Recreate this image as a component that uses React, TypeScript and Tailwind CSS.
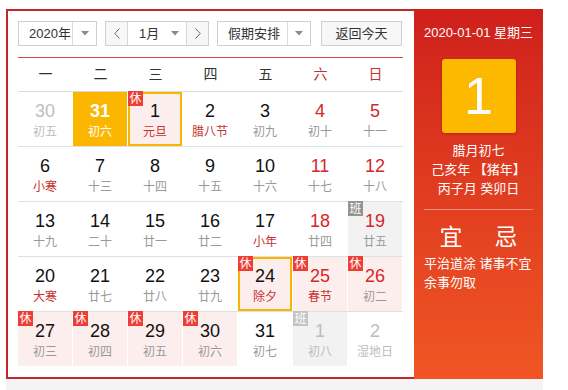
import React from "react";

type Cell = {
  n: string;
  l: string;
  numRed?: boolean;
  lunarRed?: boolean;
  faded?: boolean;
  bg?: "pink" | "gray" | "yellow";
  ring?: boolean;
  badge?: "休" | "班";
  badgeLight?: boolean;
};

const rows: Cell[][] = [
  [
    { n: "30", l: "初五", faded: true },
    { n: "31", l: "初六", bg: "yellow" },
    { n: "1", l: "元旦", lunarRed: true, bg: "pink", ring: true, badge: "休" },
    { n: "2", l: "腊八节", lunarRed: true },
    { n: "3", l: "初九" },
    { n: "4", l: "初十", numRed: true },
    { n: "5", l: "十一", numRed: true },
  ],
  [
    { n: "6", l: "小寒", lunarRed: true },
    { n: "7", l: "十三" },
    { n: "8", l: "十四" },
    { n: "9", l: "十五" },
    { n: "10", l: "十六" },
    { n: "11", l: "十七", numRed: true },
    { n: "12", l: "十八", numRed: true },
  ],
  [
    { n: "13", l: "十九" },
    { n: "14", l: "二十" },
    { n: "15", l: "廿一" },
    { n: "16", l: "廿二" },
    { n: "17", l: "小年", lunarRed: true },
    { n: "18", l: "廿四", numRed: true },
    { n: "19", l: "廿五", numRed: true, bg: "gray", badge: "班" },
  ],
  [
    { n: "20", l: "大寒", lunarRed: true },
    { n: "21", l: "廿七" },
    { n: "22", l: "廿八" },
    { n: "23", l: "廿九" },
    { n: "24", l: "除夕", lunarRed: true, bg: "pink", ring: true, badge: "休" },
    { n: "25", l: "春节", numRed: true, lunarRed: true, bg: "pink", badge: "休" },
    { n: "26", l: "初二", numRed: true, bg: "pink", badge: "休" },
  ],
  [
    { n: "27", l: "初三", bg: "pink", badge: "休" },
    { n: "28", l: "初四", bg: "pink", badge: "休" },
    { n: "29", l: "初五", bg: "pink", badge: "休" },
    { n: "30", l: "初六", bg: "pink", badge: "休" },
    { n: "31", l: "初七" },
    { n: "1", l: "初八", faded: true, bg: "gray", badge: "班", badgeLight: true },
    { n: "2", l: "湿地日", faded: true },
  ],
];

const weekdays = ["一", "二", "三", "四", "五", "六", "日"];

function Caret() {
  return (
    <svg width="8" height="5" viewBox="0 0 8 5">
      <polygon points="0,0 8,0 4,4.5" fill="#8a8a8a" />
    </svg>
  );
}

function Chevron({ dir }: { dir: "l" | "r" }) {
  return (
    <svg width="6" height="11" viewBox="0 0 6 11">
      <polyline
        points={dir === "l" ? "5.5,0.5 0.8,5.5 5.5,10.5" : "0.5,0.5 5.2,5.5 0.5,10.5"}
        fill="none"
        stroke="#666"
        strokeWidth="1"
      />
    </svg>
  );
}

function DayCell({ c }: { c: Cell }) {
  let bg = "bg-white";
  if (c.bg === "pink") bg = "bg-[#fdeeee]";
  if (c.bg === "gray") bg = "bg-[#f2f2f2]";
  if (c.bg === "yellow") bg = "bg-[#fbb700]";

  let numColor = "text-[#111]";
  if (c.numRed) numColor = "text-[#d7262b]";
  if (c.faded) numColor = "text-[#bdbdbd]";
  if (c.bg === "yellow") numColor = "text-white";

  let lunarColor = "text-[#999]";
  if (c.lunarRed) lunarColor = "text-[#c9302c]";
  if (c.faded) lunarColor = "text-[#bdbdbd]";
  if (c.bg === "yellow") lunarColor = "text-white";

  return (
    <div className="w-[55px] pr-px">
      <div
        className={`relative h-[54px] ${bg} flex flex-col items-center pt-[9px] ${
          c.ring ? "shadow-[inset_0_0_0_2px_#f7b500]" : ""
        }`}
      >
        {c.badge && (
          <div
            className={`absolute left-0 top-[-1px] w-[15px] h-[15px] flex items-center justify-center text-[12px] leading-none text-white ${
              c.badge === "休"
                ? "bg-[#ee3d35]"
                : c.badgeLight
                ? "bg-[#c4c4c4]"
                : "bg-[#939393]"
            }`}
          >
            {c.badge}
          </div>
        )}
        <div className={`text-[18px] leading-[20px] ${numColor} ${c.bg === "yellow" ? "font-bold" : ""}`}>{c.n}</div>
        <div className={`mt-[3px] text-[12px] leading-[16px] ${lunarColor}`}>{c.l}</div>
      </div>
    </div>
  );
}

export default function App() {
  return (
    <div
      className="w-[568px] h-[390px] bg-white overflow-hidden"
      style={{ fontFamily: '"Liberation Sans", "Noto Sans CJK SC", sans-serif' }}
    >
      <div className="pl-[6px] pt-[9px]">
        <div className="flex w-[537px] h-[370px]">
          {/* left panel */}
          <div className="w-[408px] h-[370px] border-2 border-r-0 border-[#c1272d] pt-[10px] pl-[10px]">
            {/* toolbar */}
            <div className="flex h-[25px] text-[13px] text-[#333]">
              <div className="flex w-[79px] h-[25px] border border-[#d0d0d0] bg-white">
                <div className="w-[54px] pl-[10px] flex items-center border-r border-[#dcdcdc]">2020年</div>
                <div className="flex-1 flex items-center justify-center">
                  <Caret />
                </div>
              </div>
              <div className="ml-[8px] flex w-[104px] h-[25px] border border-[#d0d0d0]">
                <div className="w-[22px] bg-[#f7f7f7] flex items-center justify-center border-r border-[#d6d6d6]">
                  <Chevron dir="l" />
                </div>
                <div className="w-[59px] bg-white flex items-center pl-[11px] pr-[7px] justify-between border-r border-[#d6d6d6]">
                  <span>1月</span>
                  <Caret />
                </div>
                <div className="flex-1 bg-[#f7f7f7] flex items-center justify-center">
                  <Chevron dir="r" />
                </div>
              </div>
              <div className="ml-[8px] flex w-[94px] h-[25px] border border-[#d0d0d0] bg-white">
                <div className="w-[70px] pl-[10px] flex items-center border-r border-[#dcdcdc]">假期安排</div>
                <div className="flex-1 flex items-center justify-center">
                  <Caret />
                </div>
              </div>
              <div className="ml-[10px] w-[81px] h-[25px] border border-[#d0d0d0] bg-[#f7f7f7] flex items-center justify-center">
                返回今天
              </div>
            </div>

            {/* calendar */}
            <div className="mt-[11px] w-[385px] border-t border-[#d9474b]">
              <div className="grid grid-cols-7 h-[34px] border-b border-[#dcdcdc]">
                {weekdays.map((w, i) => (
                  <div
                    key={w}
                    className={`flex items-center justify-center text-[14px] ${
                      i >= 5 ? "text-[#c5302f]" : "text-[#333]"
                    }`}
                  >
                    {w}
                  </div>
                ))}
              </div>
              {rows.map((r, ri) => (
                <div
                  key={ri}
                  className={`flex ${ri < rows.length - 1 ? "border-b border-[#e0e0e0]" : ""}`}
                >
                  {r.map((c, ci) => (
                    <DayCell key={ci} c={c} />
                  ))}
                </div>
              ))}
            </div>
          </div>

          {/* right panel */}
          <div className="w-[129px] h-[370px] bg-linear-to-b from-[#cf1f1c] to-[#f15524] px-[10px] pt-[16px] flex flex-col items-center text-white">
            <div className="text-[13px] leading-[16px] whitespace-nowrap">2020-01-01 星期三</div>
            <div className="mt-[18px] w-[74px] h-[74px] rounded-[3px] bg-[#fcb900] shadow-[0_1px_3px_rgba(120,0,0,0.35)] flex items-center justify-center text-[52px] leading-none">
              1
            </div>
            <div className="mt-[8px] text-[13px] leading-[19px] text-center">
              <div>腊月初七</div>
              <div>己亥年 【猪年】</div>
              <div>丙子月 癸卯日</div>
            </div>
            <div className="mt-[11px] w-full h-px bg-[#f58a80]" />
            <div className="mt-[13px] flex gap-[32px] text-[23px] leading-[28px]">
              <span>宜</span>
              <span>忌</span>
            </div>
            <div className="mt-[3px] w-full text-[13px] leading-[19px] text-left">
              <div className="whitespace-nowrap">平治道涂 诸事不宜</div>
              <div>余事勿取</div>
            </div>
          </div>
        </div>
        <div className="w-[537px] h-[11px] bg-[#f4f4f5]" />
      </div>
    </div>
  );
}
